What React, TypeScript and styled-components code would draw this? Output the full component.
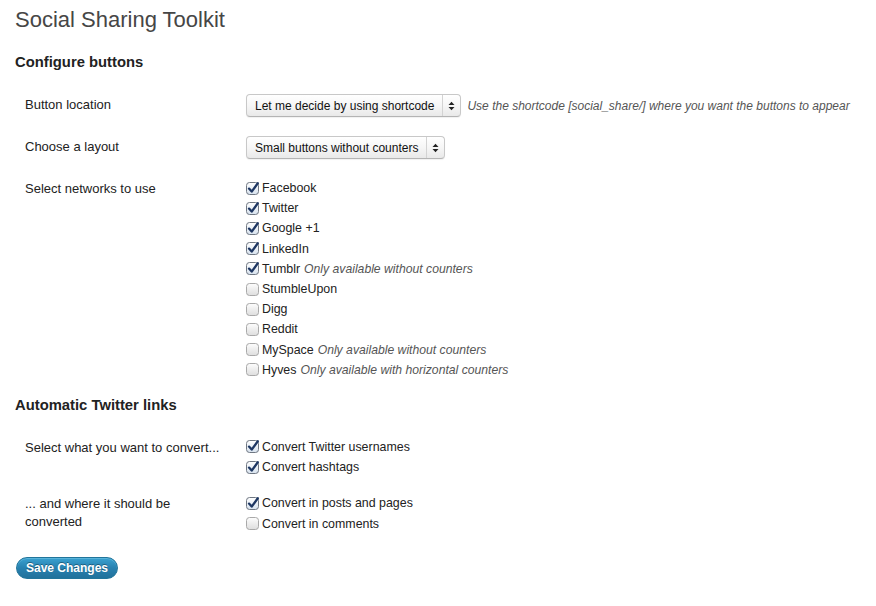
import React, { useId } from "react";
import styled, { createGlobalStyle } from "styled-components";

const Global = createGlobalStyle`
  html, body { margin: 0; padding: 0; background: #fff; }
  body { font-family: "Liberation Sans", Arial, sans-serif; color: #222; }
`;

const Page = styled.div`
  padding: 5px 15px 20px 15px;
`;

const Title = styled.h2`
  margin: 0;
  font-size: 22px;
  line-height: 29px;
  font-weight: normal;
  color: #464646;
`;

const SectionHeading = styled.h3<{ $top: number }>`
  margin: ${(p) => p.$top}px 0 0 0;
  font-size: 14.8px;
  line-height: 20px;
  font-weight: bold;
  color: #222;
`;

const FormTable = styled.div<{ $top: number }>`
  display: flex;
  flex-direction: column;
  margin-top: ${(p) => p.$top}px;
`;

const Row = styled.div<{ $pad: string }>`
  display: flex;
  align-items: flex-start;
  padding: ${(p) => p.$pad};
`;

const Label = styled.div`
  width: 200px;
  margin-left: 10px;
  margin-right: 21px;
  padding-top: 2px;
  font-size: 13px;
  line-height: 18px;
  color: #222;
`;

const Field = styled.div`
  display: flex;
  align-items: center;
  gap: 6px;
`;

const SelectBox = styled.div`
  display: flex;
  align-items: stretch;
  height: 21px;
  border: 1px solid #c8c8c8;
  border-bottom-color: #b4b4b4;
  border-radius: 4px;
  background: linear-gradient(#ffffff, #f6f6f6 50%, #e9e9e9);
  box-shadow: 0 1px 1px rgba(0, 0, 0, 0.06);
  font-size: 12px;
  color: #111;
`;

const SelectText = styled.span`
  display: flex;
  align-items: center;
  padding: 0 8px 0 8px;
  white-space: nowrap;
`;

const SelectArrow = styled.span`
  display: flex;
  align-items: center;
  justify-content: center;
  width: 17px;
  border-left: 1px solid #d3d3d3;
`;

const Note = styled.span`
  font-style: italic;
  font-size: 12px;
  color: #555;
  white-space: nowrap;
`;

const CheckList = styled.div`
  display: flex;
  flex-direction: column;
`;

const CheckItem = styled.label`
  display: flex;
  align-items: center;
  height: 20.2px;
  font-size: 12.4px;
  color: #222;
  white-space: nowrap;
`;

const BoxWrap = styled.span`
  display: inline-flex;
  width: 14px;
  height: 14px;
  margin-right: 2px;
  margin-top: -1px;
`;

const Hint = styled.em`
  margin-left: 4px;
  font-size: 12.2px;
  color: #555;
`;

const SaveButton = styled.button`
  margin-top: 15px;
  margin-left: 1px;
  height: 22px;
  padding: 0 9px;
  border: 1px solid #21759b;
  border-radius: 11px;
  background: linear-gradient(#3aa1d0, #2781b0 50%, #21719b);
  color: #fff;
  font-family: "Liberation Sans", Arial, sans-serif;
  font-weight: bold;
  font-size: 12px;
  text-shadow: 0 -1px 0 rgba(0, 0, 0, 0.35);
  box-shadow: inset 0 1px 0 rgba(120, 200, 230, 0.5);
  cursor: pointer;
`;

function UpDown() {
  return (
    <svg width="7" height="10" viewBox="0 0 7 10">
      <path d="M0.5 4 L3.5 0.8 L6.5 4 Z" fill="#222" />
      <path d="M0.5 6 L3.5 9.2 L6.5 6 Z" fill="#222" />
    </svg>
  );
}

function Select({ value }: { value: string }) {
  return (
    <SelectBox>
      <SelectText>{value}</SelectText>
      <SelectArrow>
        <UpDown />
      </SelectArrow>
    </SelectBox>
  );
}

function Box({ checked }: { checked: boolean }) {
  const id = useId().replace(/:/g, "");
  return (
    <BoxWrap>
      <svg width="14" height="14" viewBox="0 0 14 14">
        <defs>
          <linearGradient id={`g${id}`} x1="0" y1="0" x2="0" y2="1">
            <stop offset="0" stopColor={checked ? "#ffffff" : "#fdfdfd"} />
            <stop offset="1" stopColor={checked ? "#d7e2ee" : "#dedede"} />
          </linearGradient>
        </defs>
        <rect
          x="0.5"
          y="1.5"
          width="12"
          height="12"
          rx="3"
          fill={`url(#g${id})`}
          stroke={checked ? "#6f7782" : "#a9a9a9"}
        />
        {checked && (
          <path
            d="M3 7.6 L5.7 10.6 L11.8 2.2"
            stroke="#1e3763"
            strokeWidth="2.3"
            fill="none"
            strokeLinecap="round"
            strokeLinejoin="round"
          />
        )}
      </svg>
    </BoxWrap>
  );
}

type Item = { label: string; checked: boolean; hint?: string };

function Checks({ items }: { items: Item[] }) {
  return (
    <CheckList>
      {items.map((it) => (
        <CheckItem key={it.label}>
          <Box checked={it.checked} />
          {it.label}
          {it.hint && <Hint>{it.hint}</Hint>}
        </CheckItem>
      ))}
    </CheckList>
  );
}

const networks: Item[] = [
  { label: "Facebook", checked: true },
  { label: "Twitter", checked: true },
  { label: "Google +1", checked: true },
  { label: "LinkedIn", checked: true },
  { label: "Tumblr", checked: true, hint: "Only available without counters" },
  { label: "StumbleUpon", checked: false },
  { label: "Digg", checked: false },
  { label: "Reddit", checked: false },
  { label: "MySpace", checked: false, hint: "Only available without counters" },
  { label: "Hyves", checked: false, hint: "Only available with horizontal counters" },
];

export default function App() {
  return (
    <>
      <Global />
      <Page>
        <Title>Social Sharing Toolkit</Title>
        <SectionHeading $top={18}>Configure buttons</SectionHeading>
        <FormTable $top={12}>
          <Row $pad="10px 0 9px 0">
            <Label>Button location</Label>
            <Field>
              <Select value="Let me decide by using shortcode" />
              <Note>Use the shortcode [social_share/] where you want the buttons to appear</Note>
            </Field>
          </Row>
          <Row $pad="10px 0 9px 0">
            <Label>Choose a layout</Label>
            <Field>
              <Select value="Small buttons without counters" />
            </Field>
          </Row>
          <Row $pad="10px 0 9px 0">
            <Label>Select networks to use</Label>
            <Checks items={networks} />
          </Row>
        </FormTable>
        <SectionHeading $top={6}>Automatic Twitter links</SectionHeading>
        <FormTable $top={14}>
          <Row $pad="8px 0">
            <Label>Select what you want to convert...</Label>
            <Checks
              items={[
                { label: "Convert Twitter usernames", checked: true },
                { label: "Convert hashtags", checked: true },
              ]}
            />
          </Row>
          <Row $pad="8px 0">
            <Label>... and where it should be converted</Label>
            <Checks
              items={[
                { label: "Convert in posts and pages", checked: true },
                { label: "Convert in comments", checked: false },
              ]}
            />
          </Row>
        </FormTable>
        <SaveButton>Save Changes</SaveButton>
      </Page>
    </>
  );
}
